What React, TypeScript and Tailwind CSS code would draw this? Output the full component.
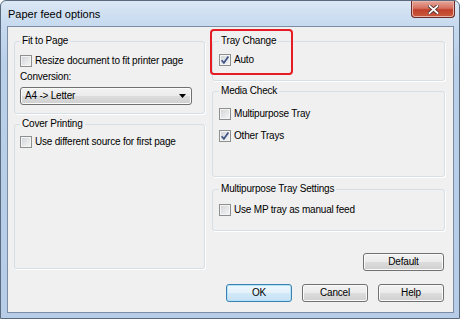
import React from 'react'

const font = "font-['Liberation_Sans',Arial,sans-serif]"

function CheckBox({ checked }: { checked?: boolean }) {
  return (
    <span className="flex h-[12px] w-[12px] shrink-0 items-center justify-center border border-[#8e8f8f] bg-[linear-gradient(135deg,#cfd2d6,#f7f7f7)] shadow-[inset_0_0_0_1px_#f4f4f4]">
      {checked && (
        <svg width="10" height="10" viewBox="0 0 10 10">
          <path d="M1.6 5.2 L3.9 7.8 L8.4 1.6" fill="none" stroke="#3f5585" strokeWidth="1.7" />
        </svg>
      )}
    </span>
  )
}

function CheckRow({ label, checked, className }: { label: string; checked?: boolean; className?: string }) {
  return (
    <div className={`flex h-[12px] items-center gap-[3px] ${className ?? ''}`}>
      <CheckBox checked={checked} />
      <span className="leading-[12px]">{label}</span>
    </div>
  )
}

function Group({ title, className, children }: { title: string; className: string; children: React.ReactNode }) {
  return (
    <fieldset className={`rounded-[3px] border border-[#d5dfe5] shadow-[1px_1px_0_#ffffff] ${className}`}>
      <legend className="px-[2px] leading-[12px]">{title}</legend>
      {children}
    </fieldset>
  )
}

function Button({ label, primary, className }: { label: string; primary?: boolean; className: string }) {
  return (
    <button
      type="button"
      className={`flex h-[18px] items-center justify-center rounded-[3px] border leading-[12px] ${
        primary
          ? 'border-[#3c7fb1] bg-[linear-gradient(to_bottom,#eef7fd_0%,#e3f1fb_50%,#d3e9f8_50%,#c6e1f5_100%)] shadow-[inset_0_0_0_1px_#b3e3fa]'
          : 'border-[#707070] bg-[linear-gradient(to_bottom,#f2f2f2_0%,#ebebeb_50%,#dddddd_50%,#cfcfcf_100%)] shadow-[inset_0_0_0_1px_#fbfbfb]'
      } ${className}`}
    >
      {label}
    </button>
  )
}

export default function App() {
  return (
    <div className={`${font} h-[319px] w-[460px] bg-white text-[10px] tracking-[-0.2px] text-black`}>
      <div className="flex h-[319px] w-[460px] flex-col rounded-t-[6px] border border-[#5a6b80] bg-[linear-gradient(to_bottom,#dbe7f5,#c8dbef_22px,#bad0e9_60px,#b7cde7)]">
        {/* title bar */}
        <div className="flex h-[25px] items-start justify-between">
          <span className="ml-[7px] mt-[7px] text-[11px] leading-[13px] tracking-normal">Paper feed options</span>
          <div className="mr-[4px] flex h-[17px] w-[44px] items-center justify-center rounded-b-[4px] border border-t-0 border-[#6b2a25] bg-[linear-gradient(to_bottom,#e6a79c,#d4715f_45%,#c1402a_55%,#c85a3e)] shadow-[inset_0_0_0_1px_#e8b3a8]">
            <svg width="11" height="9" viewBox="0 0 11 9">
              <path d="M1.5 1 L9.5 8 M9.5 1 L1.5 8" stroke="#4a2b2b" strokeWidth="3.4" strokeLinecap="square" />
              <path d="M1.5 1 L9.5 8 M9.5 1 L1.5 8" stroke="#ffffff" strokeWidth="1.8" strokeLinecap="square" />
            </svg>
          </div>
        </div>

        {/* client area */}
        <div className="ml-[6px] flex h-[287px] w-[447px] border border-[#7b8da5] bg-[#f0f0f0] px-[6px] pt-[8px]">
          {/* left column */}
          <div className="flex w-[191px] flex-col">
            <Group title="Fit to Page" className="h-[79px] px-[5px]">
              <CheckRow label="Resize document to fit printer page" className="mt-[8px]" />
              <div className="mt-[4px] leading-[12px]">Conversion:</div>
              <div className="mt-[4px] flex h-[18px] w-[172px] items-center justify-between rounded-[3px] border border-[#707070] bg-[linear-gradient(to_bottom,#f2f2f2_0%,#ebebeb_50%,#dddddd_50%,#cfcfcf_100%)] pl-[4px] pr-[5px] shadow-[inset_0_0_0_1px_#fbfbfb]">
                <span className="leading-[12px]">A4 -&gt; Letter</span>
                <svg width="7" height="4" viewBox="0 0 7 4">
                  <path d="M0 0 H7 L3.5 4 Z" fill="#000" />
                </svg>
              </div>
            </Group>
            <Group title="Cover Printing" className="mt-[4px] h-[151px] px-[5px]">
              <CheckRow label="Use different source for first page" className="mt-[6px]" />
            </Group>
          </div>

          {/* right column */}
          <div className="relative ml-[7px] flex w-[233px] flex-col">
            <Group title="Tray Change" className="h-[46px] px-[6px]">
              <CheckRow label="Auto" checked className="mt-[7px]" />
            </Group>
            <Group title="Media Check" className="mt-[4px] h-[92px] px-[6px]">
              <CheckRow label="Multipurpose Tray" className="mt-[11px]" />
              <CheckRow label="Other Trays" checked className="mt-[10px]" />
            </Group>
            <Group title="Multipurpose Tray Settings" className="mt-[6px] h-[48px] px-[6px]">
              <CheckRow label="Use MP tray as manual feed" className="mt-[9px]" />
            </Group>

            <div className="mt-[22px] flex justify-end pr-[1px]">
              <Button label="Default" className="w-[81px]" />
            </div>
            <div className="mt-[13px] flex justify-end gap-[10px] pr-[1px]">
              <Button label="OK" primary className="w-[66px]" />
              <Button label="Cancel" className="w-[66px]" />
              <Button label="Help" className="w-[66px]" />
            </div>

            {/* callout highlight */}
            <div className="absolute left-[-2px] top-[-6px] h-[46px] w-[83px] rounded-[4px] border-2 border-[#e51c24]" />
          </div>
        </div>
      </div>
    </div>
  )
}
